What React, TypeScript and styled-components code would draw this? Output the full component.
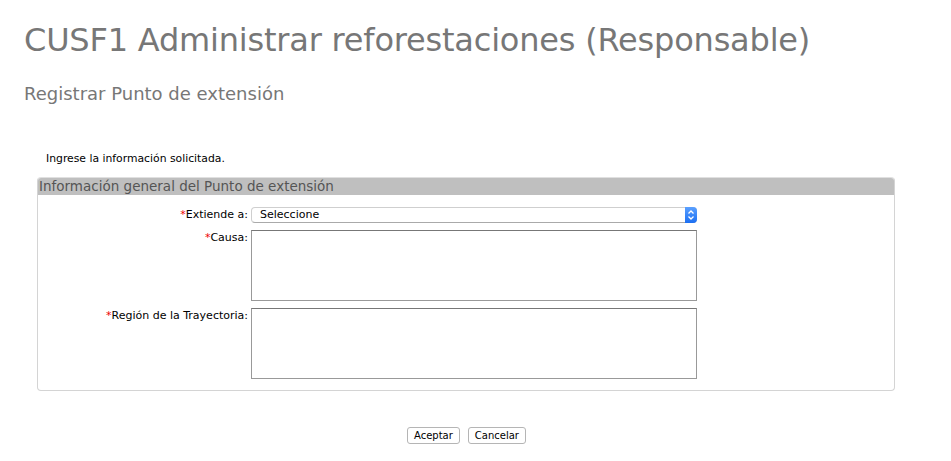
import React from "react";
import styled, { createGlobalStyle } from "styled-components";

const Global = createGlobalStyle`
  html, body { margin: 0; padding: 0; background: #fff; }
  body { font-family: "DejaVu Sans", Verdana, sans-serif; color: #000; }
`;

const Page = styled.div`
  width: 951px;
  height: 461px;
  overflow: hidden;
  box-sizing: border-box;
  padding-top: 20px;
`;

const Title = styled.h1`
  margin: 0 0 0 24px;
  font-size: 32px;
  font-weight: normal;
  color: #777;
  line-height: 40px;
  letter-spacing: -0.2px;
`;

const Subtitle = styled.h2`
  margin: 23px 0 0 24px;
  font-size: 18px;
  font-weight: normal;
  color: #777;
  line-height: 22px;
`;

const Intro = styled.p`
  margin: 47px 0 0 46px;
  font-size: 10.8px;
  line-height: 14px;
`;

const Panel = styled.fieldset`
  margin: 11px 56px 0 37px;
  padding: 0 0 11px 0;
  border: 1px solid #d4d4d4;
  border-top-color: #e0e0e0;
  border-radius: 4px;
  min-width: 0;
`;

const PanelHeader = styled.div`
  background: #bfbfbf;
  color: #555;
  font-size: 13.5px;
  line-height: 17px;
  height: 17px;
  padding-left: 1px;
  border-radius: 3px 3px 0 0;
`;

const FormGrid = styled.div`
  display: grid;
  grid-template-columns: 210px 446px;
  column-gap: 3px;
  row-gap: 7px;
  padding-top: 12px;
`;

const Label = styled.label<{ $top?: number }>`
  text-align: right;
  font-size: 11px;
  line-height: 14px;
  padding-top: ${(p) => p.$top ?? 1}px;
`;

const Star = styled.span`
  color: #e00;
`;

const SelectBox = styled.div`
  position: relative;
  height: 16px;
  box-sizing: border-box;
  border: 1px solid #cfcfcf;
  border-bottom-color: #aaa;
  border-radius: 4px;
  font-size: 11px;
  line-height: 14px;
  padding-left: 8px;
  background: #fff;
`;

const SelectArrow = styled.div`
  position: absolute;
  right: -1px;
  top: -1px;
  width: 12px;
  height: 16px;
  border-radius: 0 4px 4px 0;
  background: linear-gradient(#5aa0ff, #1c6ff2);
  display: flex;
  align-items: center;
  justify-content: center;
`;

const TextArea = styled.textarea`
  width: 446px;
  height: 71px;
  box-sizing: border-box;
  border: 1px solid #999;
  border-top-color: #777;
  margin: 0;
  padding: 2px;
  resize: none;
  font-family: inherit;
  font-size: 11px;
  display: block;
`;

const Actions = styled.div`
  display: flex;
  justify-content: center;
  gap: 8px;
  margin-top: 36px;
  padding-right: 18px;
`;

const Button = styled.button`
  height: 17px;
  box-sizing: border-box;
  padding: 0 6px;
  font-family: inherit;
  font-size: 10px;
  line-height: 14px;
  background: #fff;
  border: 1px solid #b5b5b5;
  border-radius: 3px;
  color: #000;
`;

export default function App() {
  return (
    <Page>
      <Global />
      <Title>CUSF1 Administrar reforestaciones (Responsable)</Title>
      <Subtitle>Registrar Punto de extensión</Subtitle>
      <Intro>Ingrese la información solicitada.</Intro>
      <Panel>
        <PanelHeader>Información general del Punto de extensión</PanelHeader>
        <FormGrid>
          <Label $top={1}>
            <Star>*</Star>Extiende a:
          </Label>
          <SelectBox>
            Seleccione
            <SelectArrow>
              <svg width="8" height="12" viewBox="0 0 8 12">
                <path d="M1.5 4.5 L4 2 L6.5 4.5 M1.5 7.5 L4 10 L6.5 7.5" stroke="#fff" strokeWidth="1.3" fill="none" />
              </svg>
            </SelectArrow>
          </SelectBox>
          <Label $top={1}>
            <Star>*</Star>Causa:
          </Label>
          <TextArea />
          <Label $top={1}>
            <Star>*</Star>Región de la Trayectoria:
          </Label>
          <TextArea />
        </FormGrid>
      </Panel>
      <Actions>
        <Button>Aceptar</Button>
        <Button>Cancelar</Button>
      </Actions>
    </Page>
  );
}
